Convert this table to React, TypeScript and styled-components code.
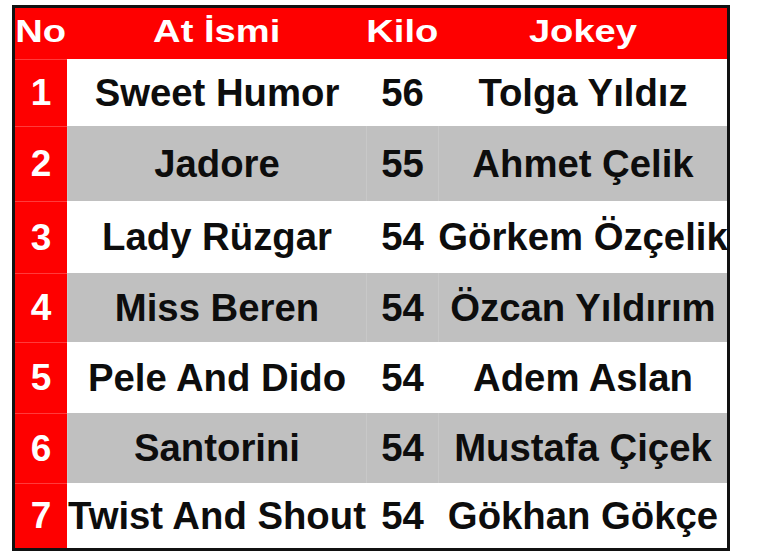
import { FC } from "react";
import styled, { createGlobalStyle } from "styled-components";

const GlobalStyle = createGlobalStyle`
  html, body {
    margin: 0;
    padding: 0;
    background: #ffffff;
  }
  body {
    font-family: "Liberation Sans", Arial, sans-serif;
  }
`;

const Page = styled.div`
  width: 770px;
  height: 558px;
  padding: 5px 0 0 12px;
  box-sizing: border-box;
`;

const Table = styled.div`
  display: grid;
  grid-template-columns: 52px 299px 72px 289px;
  grid-template-rows: 51px 67px 75px 72px 69px 71px 70px 65px;
  width: 712px;
  border: 3px solid #111111;
  background: #ffffff;
`;

const HeaderCell = styled.div`
  display: flex;
  align-items: center;
  justify-content: center;
  padding-bottom: 4px;
  box-sizing: border-box;
  background: #fe0000;
  color: #ffffff;
  font-weight: 700;
  font-size: 31px;
  white-space: nowrap;
`;

// header letters are wider than they are tall in the picture
const Stretch = styled.span`
  display: inline-block;
  transform: scaleX(1.23);
`;

const NumCell = styled.div`
  display: flex;
  align-items: center;
  justify-content: center;
  background: #fe0000;
  border-top: 1px solid #ff3b3b;
  box-sizing: border-box;
  color: #ffffff;
  font-weight: 700;
  font-size: 37px;
`;

const Cell = styled.div<{ $shade: boolean }>`
  display: flex;
  align-items: center;
  justify-content: center;
  background: ${(p) => (p.$shade ? "#c0c0c0" : "#ffffff")};
  border-left: 1px solid ${(p) => (p.$shade ? "#c8c8c8" : "#ffffff")};
  box-sizing: border-box;
  color: #0d0d0d;
  font-weight: 700;
  font-size: 38.3px;
  white-space: nowrap;
  overflow: visible;
`;

interface IRunner {
  no: number;
  horse: string;
  kilo: number;
  jockey: string;
}

const runners: IRunner[] = [
  { no: 1, horse: "Sweet Humor", kilo: 56, jockey: "Tolga Yıldız" },
  { no: 2, horse: "Jadore", kilo: 55, jockey: "Ahmet Çelik" },
  { no: 3, horse: "Lady Rüzgar", kilo: 54, jockey: "Görkem Özçelik" },
  { no: 4, horse: "Miss Beren", kilo: 54, jockey: "Özcan Yıldırım" },
  { no: 5, horse: "Pele And Dido", kilo: 54, jockey: "Adem Aslan" },
  { no: 6, horse: "Santorini", kilo: 54, jockey: "Mustafa Çiçek" },
  { no: 7, horse: "Twist And Shout", kilo: 54, jockey: "Gökhan Gökçe" },
];

const App: FC = () => {
  return (
    <>
      <GlobalStyle />
      <Page>
        <Table>
          <HeaderCell>
            <Stretch>No</Stretch>
          </HeaderCell>
          <HeaderCell>
            <Stretch>At İsmi</Stretch>
          </HeaderCell>
          <HeaderCell>
            <Stretch>Kilo</Stretch>
          </HeaderCell>
          <HeaderCell>
            <Stretch>Jokey</Stretch>
          </HeaderCell>
          {runners.map((r) => {
            const shade = r.no % 2 === 0;
            return [
              <NumCell key={`n${r.no}`}>{r.no}</NumCell>,
              <Cell key={`h${r.no}`} $shade={shade}>
                {r.horse}
              </Cell>,
              <Cell key={`k${r.no}`} $shade={shade}>
                {r.kilo}
              </Cell>,
              <Cell key={`j${r.no}`} $shade={shade}>
                {r.jockey}
              </Cell>,
            ];
          })}
        </Table>
      </Page>
    </>
  );
};

export default App;
